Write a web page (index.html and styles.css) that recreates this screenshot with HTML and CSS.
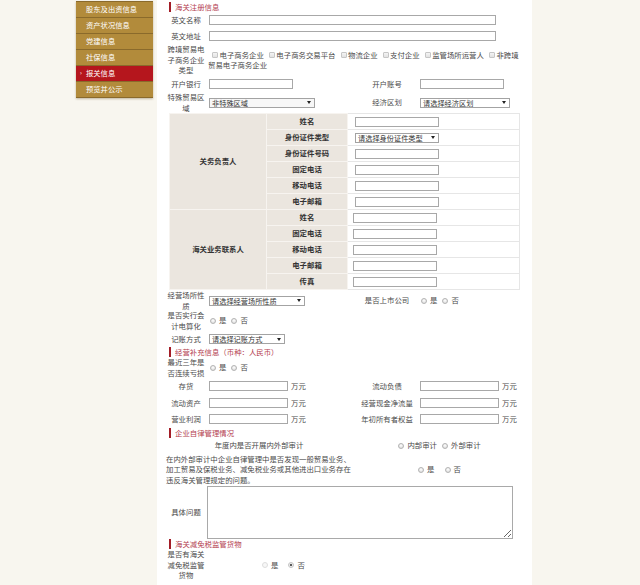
FILE: index.html
```html
<!DOCTYPE html>
<html lang="zh-CN">
<head>
<meta charset="utf-8">
<title>报关信息</title>
<link rel="stylesheet" href="styles.css">
</head>
<body>
<div class="page">
  <ul class="sidebar">
    <li>股东及出资信息</li>
    <li>资产状况信息</li>
    <li>党建信息</li>
    <li>社保信息</li>
    <li class="active">报关信息</li>
    <li>预览并公示</li>
  </ul>
  <div class="panel">
    <div class="form">
      <div class="sec s1">海关注册信息</div>

      <div class="row h16">
        <div class="lbl">英文名称</div>
        <div class="fld span3"><input class="ipt w287" type="text"></div>
      </div>
      <div class="row h16">
        <div class="lbl">英文地址</div>
        <div class="fld span3"><input class="ipt w287" type="text"></div>
      </div>
      <div class="row h32">
        <div class="lbl">跨境贸易电子商务企业类型</div>
        <div class="checks span3">
          <span class="chk"><i class="cb"></i>电子商务企业</span><span class="chk"><i class="cb"></i>电子商务交易平台</span><span class="chk"><i class="cb"></i>物流企业</span><span class="chk"><i class="cb"></i>支付企业</span><span class="chk"><i class="cb"></i>监管场所运营人</span><span class="chk"><i class="cb"></i>非跨境<br>贸易电子商务企业</span>
        </div>
      </div>
      <div class="row h16">
        <div class="lbl">开户银行</div>
        <div class="fld"><input class="ipt w84" type="text"></div>
        <div class="lbl nw">开户账号</div>
        <div class="fld r"><input class="ipt w84" type="text"></div>
      </div>
      <div class="row h21">
        <div class="lbl">特殊贸易区域</div>
        <div class="fld"><div class="sel w106 grey"><span>非特殊区域</span><i class="arr"></i></div></div>
        <div class="lbl nw">经济区划</div>
        <div class="fld r"><div class="sel w90"><span>请选择经济区划</span><i class="arr"></i></div></div>
      </div>

      <table class="contacts">
        <colgroup><col class="c1"><col class="c2"><col class="c3"></colgroup>
        <tr><th class="grp" rowspan="6">关务负责人</th><th>姓名</th><td><input class="ipt w84" type="text"></td></tr>
        <tr><th>身份证件类型</th><td><div class="sel w84"><span>请选择身份证件类型</span><i class="arr"></i></div></td></tr>
        <tr><th>身份证件号码</th><td><input class="ipt w84" type="text"></td></tr>
        <tr><th>固定电话</th><td><input class="ipt w84" type="text"></td></tr>
        <tr><th>移动电话</th><td><input class="ipt w84" type="text"></td></tr>
        <tr><th>电子邮箱</th><td><input class="ipt w84" type="text"></td></tr>
        <tr><th class="grp" rowspan="5">海关业务联系人</th><th>姓名</th><td class="g2"><input class="ipt w84" type="text"></td></tr>
        <tr><th>固定电话</th><td class="g2"><input class="ipt w84" type="text"></td></tr>
        <tr><th>移动电话</th><td class="g2"><input class="ipt w84" type="text"></td></tr>
        <tr><th>电子邮箱</th><td class="g2"><input class="ipt w84" type="text"></td></tr>
        <tr><th>传真</th><td class="g2"><input class="ipt w84" type="text"></td></tr>
      </table>

      <div class="row h20">
        <div class="lbl">经营场所性质</div>
        <div class="fld"><div class="sel w96"><span>请选择经营场所性质</span><i class="arr"></i></div></div>
        <div class="lbl nw">是否上市公司</div>
        <div class="fld r"><span class="rg"><i class="rd"></i>是</span><span class="rg"><i class="rd"></i>否</span></div>
      </div>
      <div class="row h21">
        <div class="lbl">是否实行会计电算化</div>
        <div class="fld"><span class="rg"><i class="rd"></i>是</span><span class="rg"><i class="rd"></i>否</span></div>
      </div>
      <div class="row h16">
        <div class="lbl">记账方式</div>
        <div class="fld"><div class="sel w76"><span>请选择记账方式</span><i class="arr"></i></div></div>
      </div>

      <div class="sec">经营补充信息（币种：人民币）</div>

      <div class="row h21">
        <div class="lbl">最近三年是否连续亏损</div>
        <div class="fld"><span class="rg"><i class="rd"></i>是</span><span class="rg"><i class="rd"></i>否</span></div>
      </div>
      <div class="row h16h">
        <div class="lbl">存货</div>
        <div class="fld"><input class="ipt w79" type="text"><span class="unit">万元</span></div>
        <div class="lbl nw">流动负债</div>
        <div class="fld r"><input class="ipt w79" type="text"><span class="unit">万元</span></div>
      </div>
      <div class="row h16h">
        <div class="lbl">流动资产</div>
        <div class="fld"><input class="ipt w79" type="text"><span class="unit">万元</span></div>
        <div class="lbl nw">经营现金净流量</div>
        <div class="fld r"><input class="ipt w79" type="text"><span class="unit">万元</span></div>
      </div>
      <div class="row h16h">
        <div class="lbl">营业利润</div>
        <div class="fld"><input class="ipt w79" type="text"><span class="unit">万元</span></div>
        <div class="lbl nw">年初所有者权益</div>
        <div class="fld r"><input class="ipt w79" type="text"><span class="unit">万元</span></div>
      </div>

      <div class="sec tall">企业自律管理情况</div>

      <div class="row2 h15">
        <div class="q center">年度内是否开展内外部审计</div>
        <div class="opts"><span class="rg"><i class="rd"></i>内部审计</span><span class="rg"><i class="rd"></i>外部审计</span></div>
      </div>
      <div class="row2 h33">
        <div class="q">在内外部审计中企业自律管理中是否发现一般贸易业务、<br>加工贸易及保税业务、减免税业务或其他进出口业务存在<br>违反海关管理规定的问题。</div>
        <div class="opts wide"><span class="rg"><i class="rd"></i>是</span><span class="rg"><i class="rd"></i>否</span></div>
      </div>
      <div class="row3">
        <div class="lbl">具体问题</div>
        <textarea class="txt"></textarea>
      </div>

      <div class="sec">海关减免税监管货物</div>

      <div class="row3 h32">
        <div class="lbl">是否有海关减免税监管货物</div>
        <div class="opts last wide"><span class="rg"><i class="rd off"></i>是</span><span class="rg"><i class="rd on"></i>否</span></div>
      </div>
    </div>
  </div>
</div>
</body>
</html>
```

FILE: styles.css
```css
* { box-sizing: border-box; }
html, body { margin: 0; padding: 0; }
body {
  background: #f8f6ef;
  font-family: "Noto Sans CJK SC", "Liberation Sans", sans-serif;
  font-size: 7.4px;
  line-height: 10.5px;
  color: #4a4a4a;
  overflow: hidden;
}
.page {
  display: flex;
  align-items: flex-start;
  padding-left: 76px;
  height: 585px;
}

/* sidebar */
.sidebar {
  list-style: none;
  margin: 1px 4px 0 0;
  padding: 0;
  width: 77px;
  flex: none;
  background: #b28b3b;
  border-top: 1px solid #8a6a2b;
  box-shadow: 0 1px 2px rgba(90, 60, 10, 0.35);
}
.sidebar li {
  display: flex;
  align-items: center;
  height: 16px;
  padding-left: 4px;
  border-bottom: 1px solid #8a6a2b;
  color: #fff;
  font-size: 7.3px;
  white-space: nowrap;
}
.sidebar li::before { content: ""; width: 6px; flex: none; font-size: 6px; }
.sidebar li.active { background: #b5161d; }
.sidebar li.active::before { content: "›"; }

/* panel */
.panel {
  width: 375px;
  flex: none;
  align-self: stretch;
  background: #fff;
  padding: 0 12px 0 9px;
}
.form { width: 354px; }

.sec {
  display: flex;
  align-items: center;
  height: 10px;
  margin-left: 3px;
  padding-left: 4px;
  border-left: 2px solid #a31d27;
  color: #b4404f;
  white-space: nowrap;
}
.sec.s1 { margin-top: 2px; }
.sec.tall { height: 10.5px; }

.row {
  display: grid;
  grid-template-columns: 40px 154px 54px 106px;
  align-items: center;
}
.row2 {
  display: grid;
  grid-template-columns: 186px 168px;
  align-items: center;
}
.row3 {
  display: grid;
  grid-template-columns: 40px 314px;
  align-items: center;
}
.h15 { height: 15px; }
.h16 { height: 16px; }
.h16h { height: 16.5px; }
.h20 { height: 20px; }
.h21 { height: 21px; }
.h32 { height: 32px; }
.h33 { height: 33px; }

.lbl { text-align: center; }
.nw { white-space: nowrap; }
.fld { display: flex; align-items: center; padding-left: 3px; }
.fld.r { padding-left: 6px; }
.span3 { grid-column: 2 / 5; }

/* inputs */
.ipt {
  display: block;
  height: 10px;
  margin: 0;
  padding: 0;
  border: 1px solid #a8a8a8;
  border-radius: 0;
  background: #fff;
  font-size: 7px;
}
.w79 { width: 79px; }
.w84 { width: 84px; }
.w287 { width: 287px; }
.w76 { width: 76px; }
.w90 { width: 90px; }
.w96 { width: 96px; }
.w106 { width: 106px; }
.unit { margin-left: 3px; white-space: nowrap; }

.sel {
  display: flex;
  align-items: center;
  justify-content: space-between;
  height: 10px;
  padding: 0 3px 0 2px;
  border: 1px solid #a3a3a3;
  background: #fff;
  color: #333;
  font-size: 7.2px;
  line-height: 8px;
  white-space: nowrap;
  overflow: hidden;
}
.sel.grey { background: #f7f7f7; }
.arr {
  flex: none;
  width: 0;
  height: 0;
  border-left: 2px solid transparent;
  border-right: 2px solid transparent;
  border-top: 3px solid #222;
}

/* checkboxes */
.checks {
  padding-left: 2px;
  white-space: nowrap;
  line-height: 10.5px;
}
.chk { margin-right: 1px; }
.cb {
  display: inline-block;
  width: 6px;
  height: 6px;
  margin: 0 1.5px 0 4px;
  vertical-align: -0.5px;
  border: 1px solid #c6c6c6;
  border-radius: 1px;
  background: linear-gradient(#f4f4f4, #e2e2e2);
}

/* radios */
.rg { display: inline-flex; align-items: center; white-space: nowrap; }
.rg + .rg { margin-left: 4px; }
.wide .rg + .rg { margin-left: 9px; }
.rd {
  display: inline-block;
  width: 6px;
  height: 6px;
  margin: 0 3px 0 1px;
  border: 1px solid #b3b3b3;
  border-radius: 50%;
  background: radial-gradient(circle at 50% 35%, #ffffff, #d6d6d6);
}
.rd.off { border-color: #dedede; background: #f7f7f7; }
.rd.on {
  border-color: #c4c4c4;
  background: radial-gradient(circle, #5a5a5a 0 1.2px, #f2f2f2 1.6px);
}

/* contacts table */
.contacts {
  margin-left: 3px;
  width: 350px;
  border-collapse: collapse;
  table-layout: fixed;
}
.contacts col.c1 { width: 97px; }
.contacts col.c2 { width: 81px; }
.contacts col.c3 { width: 172px; }
.contacts tr { height: 16px; }
.contacts th {
  padding: 0;
  background: #ebe6df;
  border: 1px solid #f7f4f0;
  color: #333;
  font-weight: bold;
  text-align: center;
  white-space: nowrap;
}
.contacts td {
  padding: 0 0 0 7px;
  border: 1px solid #e6e6e6;
}
.contacts td.g2 { padding-left: 5px; }

/* audit */
.q { white-space: nowrap; }
.q.center { text-align: center; }
.opts { display: flex; align-items: center; justify-content: center; padding-left: 6px; }
.opts.last { justify-content: flex-start; padding-left: 55px; }
.txt {
  display: block;
  width: 306px;
  height: 53px;
  margin: 0 0 0 1px;
  padding: 0;
  border: 1px solid #a9a9a9;
  resize: both;
  font-size: 7px;
}
```
